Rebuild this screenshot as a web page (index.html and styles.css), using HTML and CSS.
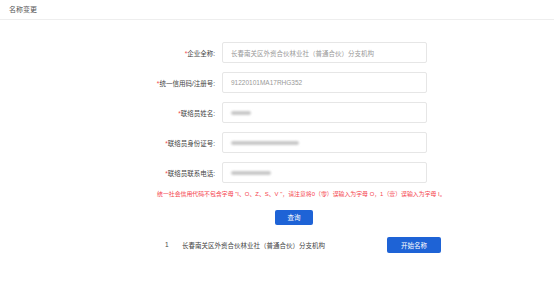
FILE: index.html
```html
<!DOCTYPE html>
<html lang="zh-CN">
<head>
    <meta charset="UTF-8">
    <title>名称变更</title>
    <link rel="stylesheet" href="styles.css">
</head>
<body>
    <div class="page">
        <div class="page-header">名称变更</div>

        <div class="form">
            <div class="form-row">
                <label class="form-label"><span class="req">*</span>企业全称:</label>
                <div class="form-input placeholder">长春南关区外资合伙林业社（普通合伙）分支机构</div>
            </div>
            <div class="form-row">
                <label class="form-label"><span class="req">*</span>统一信用码/注册号:</label>
                <div class="form-input placeholder">91220101MA17RHG352</div>
            </div>
            <div class="form-row">
                <label class="form-label"><span class="req">*</span>联络员姓名:</label>
                <div class="form-input"><span class="blur w-name"></span></div>
            </div>
            <div class="form-row">
                <label class="form-label"><span class="req">*</span>联络员身份证号:</label>
                <div class="form-input"><span class="blur w-id"></span></div>
            </div>
            <div class="form-row">
                <label class="form-label"><span class="req">*</span>联络员联系电话:</label>
                <div class="form-input"><span class="blur w-phone"></span></div>
            </div>
        </div>

        <p class="hint">统一社会信用代码不包含字母 "I、O、Z、S、V "，请注意将0（零）误输入为字母 O，1（壹）误输入为字母 I。</p>

        <div class="query-wrap">
            <button class="btn">查询</button>
        </div>

        <div class="result-row">
            <span class="result-index">1</span>
            <span class="result-name">长春南关区外资合伙林业社（普通合伙）分支机构</span>
            <button class="btn btn-wide">开始名称</button>
        </div>
    </div>
</body>
</html>
```

FILE: styles.css
```css
* {
    margin: 0;
    padding: 0;
    box-sizing: border-box;
}

body {
    font-family: "Liberation Sans", "Noto Sans CJK SC", sans-serif;
    background: #fff;
    color: #333;
}

.page {
    width: 554px;
    height: 284px;
}

.page-header {
    height: 20px;
    padding: 4px 0 0 9px;
    font-size: 7px;
    color: #555;
    border-bottom: 1px solid #eeeeee;
}

.form {
    display: flex;
    flex-direction: column;
    gap: 9px;
    padding: 22px 0 0 135px;
}

.form-row {
    display: flex;
    align-items: center;
    gap: 7px;
}

.form-label {
    width: 80px;
    text-align: right;
    font-size: 6.5px;
    color: #444;
}

.req {
    color: #f04848;
}

.form-input {
    width: 205px;
    height: 21px;
    border: 1px solid #e6e6e6;
    border-radius: 2px;
    padding: 0 8px;
    display: flex;
    align-items: center;
    font-size: 6.5px;
    color: #999;
}

.blur {
    display: inline-block;
    height: 4px;
    background: #c9c9c9;
    filter: blur(1.2px);
    border-radius: 2px;
}

.w-name {
    width: 20px;
}

.w-id {
    width: 68px;
}

.w-phone {
    width: 40px;
}

.hint {
    padding: 6px 0 0 157px;
    font-size: 5.9px;
    color: #f5444e;
    white-space: nowrap;
}

.query-wrap {
    padding: 8px 0 0 275px;
}

.btn {
    width: 38px;
    height: 15px;
    border: none;
    border-radius: 2px;
    background: #1e63d6;
    color: #fff;
    font-family: inherit;
    font-size: 6.5px;
}

.result-row {
    display: flex;
    align-items: center;
    padding: 12px 0 0 165px;
}

.result-index {
    width: 17px;
    font-size: 6.5px;
    color: #444;
}

.result-name {
    width: 205px;
    font-size: 6.5px;
    color: #444;
}

.btn-wide {
    width: 54px;
    height: 16px;
}
```
